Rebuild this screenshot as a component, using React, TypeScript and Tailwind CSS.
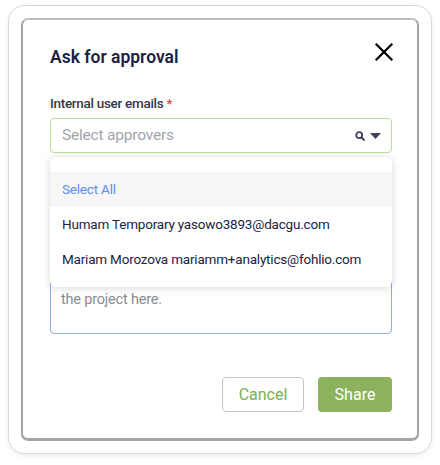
import React from "react";

export default function App() {
  return (
    <div className="w-[440px] h-[465px] bg-white pt-[5px] pl-[8px]" style={{ fontFamily: "Roboto, 'Liberation Sans', sans-serif" }}>
      <div className="w-[424px] h-[449px] rounded-[17px] border border-[#d9d9d9] bg-white shadow-[0_2px_6px_rgba(0,0,0,0.08)] p-[12px]">
        <div className="relative h-[423px] rounded-[7px] border-2 border-b-[3px] border-[#a6a6a6] border-t-[#bdbdbd] bg-white pl-[27px] pr-[25px] pt-[25px]">
          <div className="flex items-start justify-between">
            <h2 className="text-[17.5px] leading-[24px] font-semibold text-[#1b2142]">Ask for approval</h2>
            <button className="mt-[-3px] mr-[-2px] text-black">
              <svg width="20" height="20" viewBox="0 0 20 20" fill="none" stroke="currentColor" strokeWidth="2.2" strokeLinecap="square">
                <path d="M2.5 2.5 L17.5 17.5 M17.5 2.5 L2.5 17.5" />
              </svg>
            </button>
          </div>
          <div className="mt-[24px] text-[13.5px] leading-[20px] font-medium tracking-[-0.3px] text-[#343847]">
            Internal user emails <span className="text-[#e5453d]">*</span>
          </div>
          <div className="relative mt-[5px]">
            <div className="flex h-[35px] items-center justify-between rounded-[4px] border-[1.5px] border-[#bcdf9a] pl-[11px] pr-[10px]">
              <span className="text-[15.5px] tracking-[-0.2px] text-[#a0a4ab]">Select approvers</span>
              <div className="flex items-center gap-[5px] text-[#3d4459]">
                <svg width="10" height="10" viewBox="0 0 10 10" fill="none" stroke="currentColor" strokeWidth="1.8">
                  <circle cx="4.2" cy="4.2" r="3" />
                  <path d="M6.4 6.4 L9 9" strokeLinecap="round" />
                </svg>
                <svg width="11" height="6" viewBox="0 0 11 6" fill="currentColor">
                  <path d="M0 0 H11 L5.5 6 Z" />
                </svg>
              </div>
            </div>
            <div className="mt-[83px] h-[20px]" />
            <div className="mt-[4px] h-[74px] rounded-[4px] border-[1.5px] border-[#8eabeb] pl-[10px] pt-[9px] text-[14.5px] leading-[20px] tracking-[-0.2px] text-[#8c8c8c]">
              <div className="h-[20px]" />
              <div>the project here.</div>
            </div>
            <div className="absolute left-0 right-0 top-[39px] z-10 rounded-[6px] bg-white pt-[15px] pb-[10px] shadow-[0_1px_8px_rgba(0,0,0,0.16)]">
              <div className="flex h-[35px] items-center bg-[#f6f6f6] pl-[12px] text-[13.5px] tracking-[-0.2px] text-[#5b8eef]">Select All</div>
              <div className="flex h-[35px] items-center whitespace-nowrap pl-[12px] text-[13.5px] tracking-[-0.2px] text-[#1d2343]">Humam Temporary yasowo3893@dacgu.com</div>
              <div className="flex h-[35px] items-center whitespace-nowrap pl-[12px] text-[13.5px] tracking-[-0.2px] text-[#1d2343]">Mariam Morozova mariamm+analytics@fohlio.com</div>
            </div>
          </div>
          <div className="mt-[43px] flex justify-end gap-[14px]">
            <button className="h-[35px] w-[82px] rounded-[4px] border-[1.5px] border-[#c6c6c6] bg-white text-[16px] text-[#7caf4b]">Cancel</button>
            <button className="h-[35px] w-[74px] rounded-[4px] bg-[#8cb35b] text-[16px] text-white">Share</button>
          </div>
        </div>
      </div>
    </div>
  );
}
